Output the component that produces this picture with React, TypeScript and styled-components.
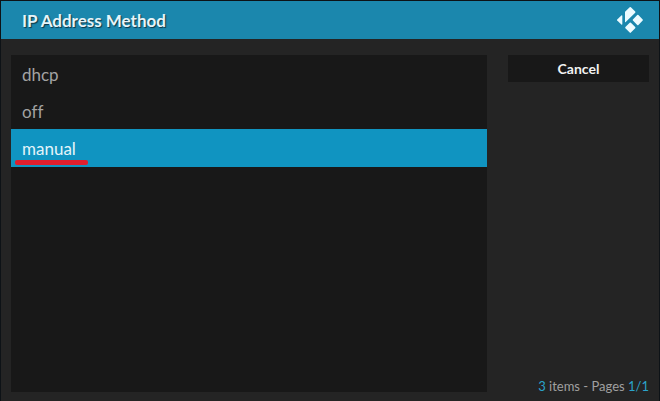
import React, { useState } from "react";
import styled, { createGlobalStyle } from "styled-components";

const GlobalStyle = createGlobalStyle`
  * { box-sizing: border-box; }
  body { margin: 0; background: #242424; }
`;

const Dialog = styled.main`
  display: flex;
  flex-direction: column;
  min-height: 100vh;
  border: 1px solid #0d1216;
  border-bottom: 0;
  background: #242424;
  font-family: Lato, sans-serif;
`;

const Header = styled.header`
  display: flex;
  align-items: center;
  justify-content: space-between;
  height: 38px;
  padding: 0 15px 0 21px;
  background: #1b87ad;
`;

const Title = styled.h1`
  margin: 0;
  padding-top: 2px;
  font-size: 17px;
  font-weight: 700;
  line-height: 24px;
  color: #e6f4f9;
  text-shadow: 1px 1px 1px #0c3444;
`;

const Body = styled.div`
  flex: 1;
  display: flex;
  gap: 21px;
  padding: 16px 10px 9px;
`;

const Options = styled.div`
  flex: 1;
  background: #181818;
`;

const Option = styled.button<{ $selected: boolean }>`
  display: flex;
  align-items: center;
  width: 100%;
  height: ${({ $selected }) => ($selected ? "38px" : "37px")};
  padding: 2px 11px 0;
  border: 0;
  background: ${({ $selected }) => ($selected ? "#1094c1" : "transparent")};
  color: ${({ $selected }) => ($selected ? "#e4f5fa" : "#a3a3a3")};
  font-family: inherit;
  font-variant-ligatures: none;
  font-size: 17px;
  line-height: 24px;
  text-align: left;
`;

const OptionLabel = styled.span`
  position: relative;
`;

const Marker = styled.span`
  position: absolute;
  left: -7px;
  right: -12px;
  bottom: -4px;
  height: 5px;
  border-radius: 2px;
  background: #e01f2d;
`;

const Sidebar = styled.aside`
  display: flex;
  flex-direction: column;
  justify-content: space-between;
  width: 141px;
`;

const CancelButton = styled.button`
  height: 27px;
  padding: 0;
  border: 0;
  background: #181818;
  color: #f2f2f2;
  font-family: inherit;
  font-size: 14px;
  font-weight: 700;
  line-height: 20px;
`;

const Status = styled.p`
  margin: 0;
  font-size: 13px;
  line-height: 12px;
  color: #a0a0a0;
  text-align: right;
  white-space: nowrap;
`;

const Count = styled.span`
  color: #2ba3cb;
`;

const Logo = () => (
  <svg width="28" height="28" viewBox="0 0 28 28" fill="#ecfbff" role="img" aria-label="Kodi">
    <path d="M13.7 1.2 Q14.3.7 14.9 1.2 L19.2 5.5 Q19.7 6.1 19.2 6.7 L9.7 16.1 Q9 16.7 9 15.8 V6.3 Q9 5.9 9.3 5.6Z" />
    <path d="M5.3 9.6 Q6.3 8.8 6.3 10 V18.1 Q6.3 19.3 5.3 18.5 L1.2 14.5 Q.7 14 1.2 13.5Z" />
    <path d="M21.2 9.1 Q21.8 8.5 22.4 9.1 L26.7 13.4 Q27.2 14 26.7 14.6 L22.4 18.9 Q21.8 19.5 21.2 18.9 L16.9 14.6 Q16.4 14 16.9 13.4Z" />
    <path d="M13.7 16.8 Q14.3 16.2 14.9 16.8 L19.2 21.1 Q19.7 21.7 19.2 22.3 L14.9 26.6 Q14.3 27.2 13.7 26.6 L9.4 22.3 Q8.9 21.7 9.4 21.1Z" />
  </svg>
);

const methods = ["dhcp", "off", "manual"];

export default function App() {
  const [selected, setSelected] = useState("manual");

  return (
    <>
      <GlobalStyle />
      <Dialog role="dialog" aria-labelledby="dialog-title">
        <Header>
          <Title id="dialog-title">IP Address Method</Title>
          <Logo />
        </Header>
        <Body>
          <Options>
            {methods.map((method) => (
              <Option
                key={method}
                type="button"
                aria-pressed={method === selected}
                $selected={method === selected}
                onClick={() => setSelected(method)}
              >
                <OptionLabel>
                  {method}
                  {method === "manual" && <Marker />}
                </OptionLabel>
              </Option>
            ))}
          </Options>
          <Sidebar>
            <CancelButton type="button">Cancel</CancelButton>
            <Status>
              <Count>3</Count> items - Pages <Count>1/1</Count>
            </Status>
          </Sidebar>
        </Body>
      </Dialog>
    </>
  );
}
